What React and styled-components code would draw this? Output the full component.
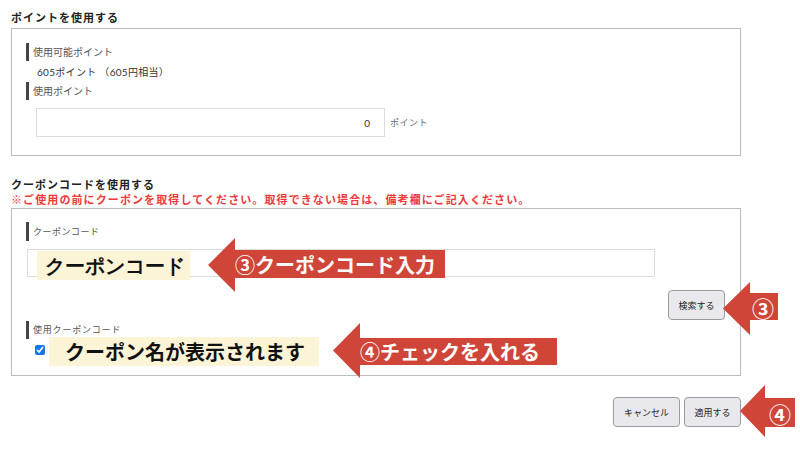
import React from 'react';
import styled, { createGlobalStyle } from 'styled-components';

const GlobalStyle = createGlobalStyle`
	body {
		margin: 0;
		background: #fff;
		font-family: "Noto Sans CJK JP", "Noto Sans", sans-serif;
		color: #333;
	}
`;

const RED = '#cf4538';

const Page = styled.div`
	position: relative;
	width: 800px;
	height: 450px;
	padding: 10px 0 0 11px;
	box-sizing: border-box;
	overflow: hidden;
`;

const SectionTitle = styled.div`
	font-size: 11px;
	line-height: 15px;
	font-weight: bold;
	letter-spacing: 1px;
	color: #222;
	margin-top: ${p => p.mt || 0}px;
`;

const Note = styled.div`
	font-size: 11px;
	line-height: 15px;
	font-weight: bold;
	letter-spacing: 1.1px;
	color: #ee3a3a;
	margin-bottom: 1px;
`;

const Panel = styled.div`
	width: 730px;
	box-sizing: border-box;
	border: 1px solid #bdbdbd;
	padding: ${p => p.pad};
	margin-top: ${p => p.mt || 0}px;
`;

const Label = styled.div`
	border-left: 3px solid #444;
	padding-left: 4px;
	font-size: ${p => p.size || 10}px;
	letter-spacing: ${p => p.ls || 0}px;
	line-height: ${p => p.h || 18}px;
	color: #555;
	margin-top: ${p => p.mt || 0}px;
`;

const Value = styled.div`
	font-family: Lato, "Noto Sans CJK JP", sans-serif;
	font-size: 10px;
	line-height: 14px;
	letter-spacing: 0.3px;
	color: #333;
	margin: 4px 0 3px 11px;
`;

const InputRow = styled.div`
	display: flex;
	align-items: center;
	gap: 5px;
	margin: ${p => p.m};
`;

const TextBox = styled.div`
	position: relative;
	box-sizing: border-box;
	width: ${p => p.w}px;
	height: ${p => p.h}px;
	border: 1px solid #dcdcdc;
	background: #fff;
	display: flex;
	align-items: center;
	justify-content: flex-end;
	padding-right: 14px;
	font-family: Lato, sans-serif;
	font-size: 10px;
	color: #333;
`;

const Unit = styled.span`
	font-size: 9px;
	color: #666;
	letter-spacing: 0.5px;
`;

const Highlight = styled.div`
	background: #fcf4d6;
	color: #111;
	font-weight: bold;
	font-size: 20px;
	line-height: 29px;
	height: 29px;
	white-space: nowrap;
	box-sizing: border-box;
	padding-left: ${p => p.pl}px;
	width: ${p => p.w}px;
`;

const InputHighlight = styled(Highlight)`
	position: absolute;
	left: 9px;
	top: 1px;
`;

const ButtonRow = styled.div`
	display: flex;
	justify-content: flex-end;
	gap: 4px;
	width: ${p => (p.w ? `${p.w}px` : 'auto')};
	margin: ${p => p.m};
`;

const Button = styled.button`
	width: ${p => p.w}px;
	height: 30px;
	box-sizing: border-box;
	border: 1px solid #9a9aa3;
	border-radius: 4px;
	background: #e9e9ed;
	font-family: "Noto Sans CJK JP", sans-serif;
	font-size: 9px;
	color: #222;
	padding: 0;
`;

const CheckRow = styled.div`
	display: flex;
	align-items: center;
	gap: 4px;
	margin: -2px 0 0 9px;
`;

const Check = styled.input`
	width: 10px;
	height: 10px;
	margin: 0 0 4px 0;
	accent-color: #1976e8;
`;

const Callout = styled.div`
	position: absolute;
	left: ${p => p.x}px;
	top: ${p => p.y}px;
	width: ${p => p.w}px;
	height: ${p => p.h}px;
`;

const CalloutShape = styled.svg`
	position: absolute;
	left: 0;
	top: 0;
`;

const CalloutText = styled.span`
	position: absolute;
	left: ${p => p.head}px;
	right: 0;
	top: ${p => p.top}px;
	height: ${p => p.bh}px;
	display: flex;
	align-items: center;
	color: #fff;
	font-weight: bold;
	font-size: ${p => p.size || 20}px;
	white-space: nowrap;
	padding-left: ${p => p.pl || 0}px;
`;

function Arrow({ x, y, w, h, head, top, bottom, text, size, pl }) {
	const mid = h / 2;
	const points = [
		[0, mid],
		[head, 0],
		[head, top],
		[w, top],
		[w, bottom],
		[head, bottom],
		[head, h],
	]
		.map(p => p.join(','))
		.join(' ');
	return (
		<Callout x={x} y={y} w={w} h={h}>
			<CalloutShape width={w} height={h} viewBox={`0 0 ${w} ${h}`}>
				<polygon points={points} fill={RED} />
			</CalloutShape>
			<CalloutText head={head} top={top} bh={bottom - top} size={size} pl={pl}>
				{text}
			</CalloutText>
		</Callout>
	);
}

export default function App() {
	return (
		<Page>
			<GlobalStyle />
			<SectionTitle>ポイントを使用する</SectionTitle>
			<Panel pad="14px 0 18px 14px" mt={3}>
				<Label>使用可能ポイント</Label>
				<Value>605ポイント （605円相当）</Value>
				<Label>使用ポイント</Label>
				<InputRow m="8px 0 0 10px">
					<TextBox w={349} h={29}>0</TextBox>
					<Unit>ポイント</Unit>
				</InputRow>
			</Panel>

			<SectionTitle mt={21}>クーポンコードを使用する</SectionTitle>
			<Note>※ご使用の前にクーポンを取得してください。取得できない場合は、備考欄にご記入ください。</Note>
			<Panel pad="13px 15px 9px 14px">
				<Label size={9} ls={0.5} h={19}>クーポンコード</Label>
				<InputRow m="8px 0 0 1px">
					<TextBox w={628} h={28}>
						<InputHighlight w={153} pl={8}>クーポンコード</InputHighlight>
					</TextBox>
				</InputRow>
				<ButtonRow m="13px 0 0 0">
					<Button w={57}>検索する</Button>
				</ButtonRow>
				<Label size={9} ls={0.8} mt={1}>使用クーポンコード</Label>
				<CheckRow>
					<Check type="checkbox" checked readOnly />
					<Highlight w={270} pl={16}>クーポン名が表示されます</Highlight>
				</CheckRow>
			</Panel>

			<ButtonRow m="21px 0 0 0" w={730}>
				<Button w={67}>キャンセル</Button>
				<Button w={57}>適用する</Button>
			</ButtonRow>

			<Arrow x={208} y={238} w={237} h={54} head={27} top={12} bottom={40} text="③クーポンコード入力" />
			<Arrow x={333} y={323} w={224} h={55} head={27} top={15} bottom={42} text="④チェックを入れる" />
			<Arrow x={723} y={282} w={55} h={53} head={27} top={11} bottom={38} text="③" size={22} pl={2} />
			<Arrow x={740} y={385} w={55} h={52} head={25} top={13} bottom={42} text="④" size={22} pl={4} />
		</Page>
	);
}
